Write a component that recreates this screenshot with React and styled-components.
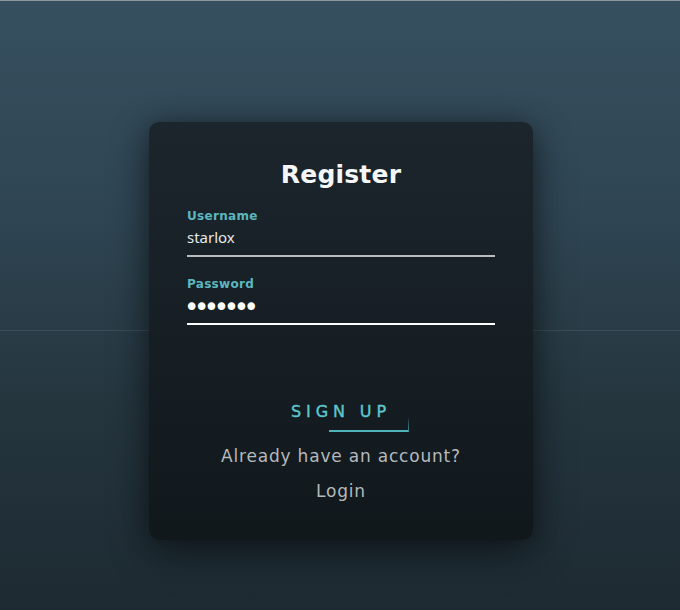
import React from 'react';
import styled, { createGlobalStyle } from 'styled-components';

const GlobalStyle = createGlobalStyle`
  html, body {
    margin: 0;
    padding: 0;
    background: #1e2b33;
  }
`;

const Page = styled.div`
  min-height: 610px;
  box-sizing: border-box;
  border-top: 1px solid #8d979c;
  padding: 121px 0 0 2px;
  display: flex;
  justify-content: center;
  align-items: flex-start;
  background:
    linear-gradient(
      to bottom,
      transparent 329px,
      rgba(255, 255, 255, 0.09) 329px,
      rgba(255, 255, 255, 0.09) 330px,
      transparent 330px
    ),
    linear-gradient(180deg, #36505f 0%, #2f4553 35%, #25363f 65%, #1d2a32 100%);
  font-family: 'DejaVu Sans', sans-serif;
`;

const Card = styled.form`
  width: 384px;
  height: 418px;
  box-sizing: border-box;
  padding: 38px 38px 0;
  border-radius: 10px;
  background: linear-gradient(180deg, rgba(26, 35, 41, 0.94) 0%, rgba(16, 23, 27, 0.95) 100%);
  box-shadow: 0 12px 40px rgba(0, 0, 0, 0.45), 0 0 24px rgba(0, 0, 0, 0.25);
  display: flex;
  flex-direction: column;
`;

const Title = styled.h1`
  margin: 0 0 19px;
  text-align: center;
  color: #f4f6f7;
  font-size: 25px;
  line-height: 30px;
  font-weight: 700;
  letter-spacing: 0.2px;
`;

const Field = styled.label`
  display: flex;
  flex-direction: column;
  margin-bottom: 20px;
`;

const Label = styled.span`
  color: #5bb7bf;
  font-size: 12px;
  line-height: 14px;
  font-weight: 700;
  letter-spacing: 0.3px;
`;

const Input = styled.input`
  background: transparent;
  border: none;
  border-bottom: 2px solid ${({ $line }) => $line};
  outline: none;
  color: ${({ $dots }) => ($dots ? '#ffffff' : '#e6e8e9')};
  font-family: ${({ $dots }) => ($dots ? "'DejaVu Sans'" : "'Noto Sans'")}, sans-serif;
  font-size: ${({ $dots }) => ($dots ? '26px' : '15px')};
  letter-spacing: ${({ $dots }) => ($dots ? '-5.4px' : '0')};
  line-height: 20px;
  padding: ${({ $dots }) => ($dots ? '6px 0 6px' : '4px 0 8px')};
  text-indent: ${({ $dots }) => ($dots ? '-3px' : '0')};
  margin: 0;
  height: 34px;
  box-sizing: border-box;
`;

const Actions = styled.div`
  display: flex;
  flex-direction: column;
  align-items: center;
  margin-top: 57px;
`;

const SignUp = styled.button`
  position: relative;
  background: none;
  border: none;
  padding: 0 0 10px 0;
  color: #5cc7d0;
  font-family: 'DejaVu Sans', sans-serif;
  font-size: 16px;
  line-height: 20px;
  font-weight: 400;
  letter-spacing: 4.9px;
  -webkit-text-stroke: 0.4px #5cc7d0;
  cursor: pointer;

  &::after {
    content: '';
    position: absolute;
    left: 38px;
    right: -18px;
    bottom: 0;
    height: 12px;
    border-bottom: 2px solid #4fb3bc;
    border-right: 1px solid rgba(79, 179, 188, 0.6);
    -webkit-mask-image: linear-gradient(to top, #000 30%, rgba(0, 0, 0, 0.2) 100%);
  }
`;

const Muted = styled.p`
  margin: ${({ $top }) => $top}px 0 0;
  color: #b5b9bc;
  font-size: 17px;
  line-height: 20px;
  letter-spacing: 0.8px;
  text-align: center;
`;

const App = () => {
  return (
    <>
      <GlobalStyle />
      <Page>
        <Card onSubmit={(e) => e.preventDefault()}>
          <Title>Register</Title>
          <Field>
            <Label>Username</Label>
            <Input type="text" defaultValue="starlox" $line="#b9bcbe" />
          </Field>
          <Field>
            <Label>Password</Label>
            <Input type="password" defaultValue="1234567" $line="#ffffff" $dots />
          </Field>
          <Actions>
            <SignUp type="submit">SIGN UP</SignUp>
            <Muted $top={14}>Already have an account?</Muted>
            <Muted $top={15}>Login</Muted>
          </Actions>
        </Card>
      </Page>
    </>
  );
};

export default App;
